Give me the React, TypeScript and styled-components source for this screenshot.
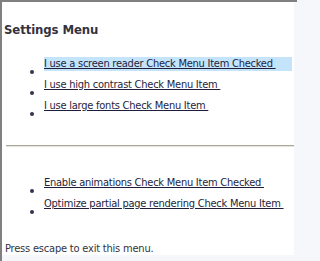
import React from "react";
import styled, { createGlobalStyle } from "styled-components";

const FONT = `"DejaVu Sans Condensed", "DejaVu Sans", sans-serif`;

const Global = createGlobalStyle`
  html, body { margin: 0; padding: 0; background: #f5f7fb; }
  body { font-family: ${FONT}; font-stretch: semi-condensed; }
`;

const Frame = styled.div`
  width: 297px;
  height: 261px;
  box-sizing: border-box;
  border-top: 2px solid #808080;
  border-left: 2px solid #808080;
  background: #f5f7fb;
  overflow: hidden;
`;

const Panel = styled.div`
  width: 292px;
  height: 253px;
  background: #ffffff;
  box-sizing: border-box;
  padding: 20px 0 0 2px;
  display: flex;
  flex-direction: column;
  font-family: ${FONT};
  font-stretch: semi-condensed;
  color: #222238;
`;

const Heading = styled.h2`
  margin: 0;
  font-size: 13px;
  font-weight: bold;
  line-height: 16px;
  letter-spacing: -0.1px;
  color: #333340;
`;

const List = styled.ul<{ $top: number }>`
  list-style: none;
  margin: ${(p) => p.$top}px 0 0 0;
  padding: 0;
  display: flex;
  flex-direction: column;
`;

const Row = styled.li`
  display: flex;
  align-items: flex-start;
  height: 21px;
`;

const Bullet = styled.span`
  width: 4px;
  height: 4px;
  border-radius: 50%;
  background: #33334d;
  margin: 13px 0 0 26px;
  flex: none;
`;

const Item = styled.a<{ $focused?: boolean }>`
  display: block;
  flex: 1;
  margin-left: 10px;
  margin-right: 2px;
  height: 14px;
  line-height: 14px;
  font-size: 11px;
  letter-spacing: -0.24px;
  color: #1e1e3c;
  background: ${(p) => (p.$focused ? "#c4e4fc" : "transparent")};
  cursor: pointer;
  white-space: nowrap;
`;

const Label = styled.span`
  text-decoration: underline;
  white-space: pre;
`;

const Separator = styled.hr`
  margin: 25px 0 0 2px;
  width: 288px;
  border: none;
  border-top: 1px solid #a9a89a;
  border-bottom: 1px solid #e4e4dc;
  height: 0;
`;

const Footer = styled.p`
  margin: 24px 0 0 1px;
  font-size: 11px;
  line-height: 14px;
  letter-spacing: -0.2px;
  color: #333340;
`;

const first = [
  { label: "I use a screen reader Check Menu Item Checked ", focused: true },
  { label: "I use high contrast Check Menu Item " },
  { label: "I use large fonts Check Menu Item " },
];

const second = [
  { label: "Enable animations Check Menu Item Checked " },
  { label: "Optimize partial page rendering Check Menu Item " },
];

export default function App() {
  return (
    <>
      <Global />
      <Frame>
        <Panel>
          <Heading>Settings Menu</Heading>
          <List $top={19}>
            {first.map((i) => (
              <Row key={i.label}>
                <Bullet />
                <Item $focused={i.focused}>
                  <Label>{i.label}</Label>
                </Item>
              </Row>
            ))}
          </List>
          <Separator />
          <List $top={29}>
            {second.map((i) => (
              <Row key={i.label}>
                <Bullet />
                <Item>
                  <Label>{i.label}</Label>
                </Item>
              </Row>
            ))}
          </List>
          <Footer>Press escape to exit this menu.</Footer>
        </Panel>
      </Frame>
    </>
  );
}
